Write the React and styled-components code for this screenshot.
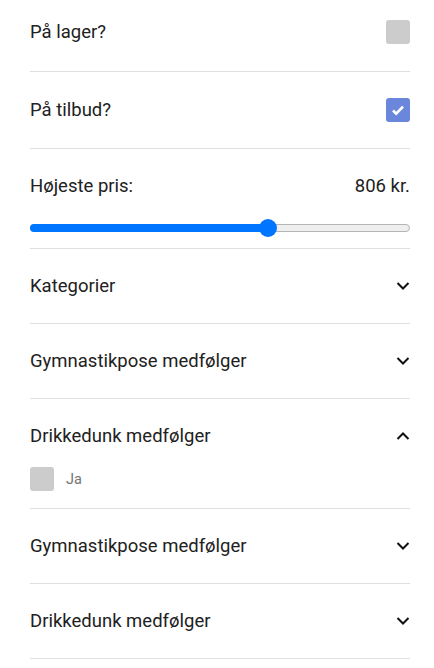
import React, { useState } from 'react'
import styled, { createGlobalStyle } from 'styled-components'

const Global = createGlobalStyle`
  body {
    margin: 0;
    background: #fff;
    font-family: Roboto, "Liberation Sans", sans-serif;
    color: #212121;
  }
`

const Page = styled.div`
  padding: 0 24px 0 30px;
  width: 380px;
`

const Row = styled.div`
  display: flex;
  align-items: center;
  justify-content: space-between;
  height: ${p => p.h}px;
  padding-bottom: ${p => p.pb || 0}px;
  border-bottom: 1px solid #e0e0e0;
  box-sizing: content-box;
`

const Label = styled.span`
  font-size: 18.5px;
  line-height: 24px;
`

const Box = styled.span`
  width: 24px;
  height: 24px;
  border-radius: 3px;
  background: ${p => (p.checked ? '#6b87db' : '#cccccc')};
  display: flex;
  align-items: center;
  justify-content: center;
  flex-shrink: 0;
`

const PriceSection = styled.div`
  border-bottom: 1px solid #e0e0e0;
  height: 100px;
  display: flex;
  flex-direction: column;
  padding-top: 25px;
  box-sizing: border-box;
`

const PriceHead = styled.div`
  display: flex;
  justify-content: space-between;
`

const Track = styled.div`
  position: relative;
  margin-top: 26px;
  height: 8px;
  border-radius: 4px;
  background: #efefef;
  border: 1px solid #b5b5b5;
  box-sizing: border-box;
`

const Fill = styled.div`
  position: absolute;
  left: -1px;
  top: -1px;
  bottom: -1px;
  background: #0075ff;
  border-radius: 4px;
`

const Thumb = styled.div`
  position: absolute;
  top: 50%;
  width: 18px;
  height: 18px;
  border-radius: 50%;
  background: #0075ff;
  transform: translate(-50%, -50%);
`

const Section = styled.div`
  border-bottom: 1px solid #e0e0e0;
`

const Head = styled.div`
  display: flex;
  align-items: center;
  justify-content: space-between;
  padding: 25px 0 ${p => (p.open ? 19 : 25)}px;
  cursor: pointer;
`

const Option = styled.div`
  display: flex;
  align-items: center;
  gap: 12px;
  height: 24px;
  padding-bottom: 17px;
`

const OptionText = styled.span`
  font-size: 14.5px;
  color: #757575;
`

const Chevron = ({ up }) => (
  <svg width="14" height="8" viewBox="0 0 14 8">
    <path
      d={up ? 'M1.5 7L7 1.5 12.5 7' : 'M1.5 1L7 6.5 12.5 1'}
      fill="none"
      stroke="#111"
      strokeWidth="2"
    />
  </svg>
)

const Check = () => (
  <svg width="16" height="16" viewBox="0 0 16 16">
    <path d="M3 8.5l3.2 3.2L13 4.6" fill="none" stroke="#fff" strokeWidth="2.6" />
  </svg>
)

const Accordion = ({ title, open }) => (
  <Section>
    <Head open={open}>
      <Label>{title}</Label>
      <Chevron up={open} />
    </Head>
    {open && (
      <Option>
        <Box />
        <OptionText>Ja</OptionText>
      </Option>
    )}
  </Section>
)

export default function App() {
  const [price] = useState(806)
  const pct = 62.6
  return (
    <Page>
      <Global />
      <Row h={64} pb={7}>
        <Label>På lager?</Label>
        <Box />
      </Row>
      <Row h={76}>
        <Label>På tilbud?</Label>
        <Box checked>
          <Check />
        </Box>
      </Row>
      <PriceSection>
        <PriceHead>
          <Label>Højeste pris:</Label>
          <Label>{price} kr.</Label>
        </PriceHead>
        <Track>
          <Fill style={{ width: `${pct}%` }} />
          <Thumb style={{ left: `${pct}%` }} />
        </Track>
      </PriceSection>
      <Accordion title="Kategorier" />
      <Accordion title="Gymnastikpose medfølger" />
      <Accordion title="Drikkedunk medfølger" open />
      <Accordion title="Gymnastikpose medfølger" />
      <Accordion title="Drikkedunk medfølger" />
    </Page>
  )
}
